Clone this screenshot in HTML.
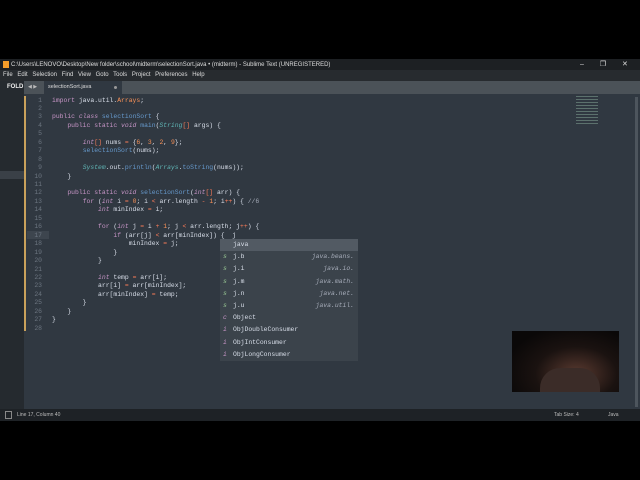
<!DOCTYPE html>
<html><head><style>
body{margin:0;width:640px;height:480px;background:#000;position:relative;overflow:hidden;font-family:"Liberation Sans",sans-serif}
.a{position:absolute}
pre{margin:0;font-family:"Liberation Mono",monospace;font-size:6.4px;line-height:8.45px;color:#d8dee9}
.k{color:#c594c5}.i{color:#c594c5;font-style:italic}.f{color:#6699cc}.t{color:#5fb3b3;font-style:italic}.n{color:#f99157}.o{color:#f97b58}.p{color:#a6acb9}.c{color:#a6acb9}
.ac div{height:12.2px;line-height:12.2px;font-family:"Liberation Mono",monospace;font-size:6.4px;color:#d8dee9;position:relative;padding-left:13px}
.ac b{position:absolute;left:3px;font-weight:normal;font-style:italic}
.ac em{position:absolute;right:4px;color:#a6acb9}
</style></head><body>
<div class="a" style="left:0;top:59px;width:640px;height:11px;background:#1d2023"></div>
<div class="a" style="left:3px;top:61px;width:6px;height:7px;background:#f59d2a"></div>
<div class="a" style="left:11px;top:60px;font-size:6px;color:#ddd;line-height:10px;white-space:nowrap">C:\Users\LENOVO\Desktop\New folder\school\midterm\selectionSort.java • (midterm) - Sublime Text (UNREGISTERED)</div>
<div class="a" style="left:580px;top:60px;font-size:7px;color:#ddd;line-height:10px;word-spacing:14px">– ❐ ✕</div>
<div class="a" style="left:0;top:70px;width:640px;height:11px;background:#272b2f"></div>
<div class="a" style="left:3px;top:70px;font-size:6px;color:#ddd;line-height:11px;word-spacing:3px;white-space:nowrap">File Edit Selection Find View Goto Tools Project Preferences Help</div>
<div class="a" style="left:0;top:81px;width:640px;height:13px;background:#4b5258"></div>
<div class="a" style="left:0;top:81px;width:24px;height:13px;background:#252a2f"></div>
<div class="a" style="left:7px;top:81px;font-size:6px;font-weight:bold;color:#eee;line-height:13px">FOLD</div>
<div class="a" style="left:28px;top:81px;font-size:5px;color:#bbb;line-height:13px">◀ ▶</div>
<div class="a" style="left:44px;top:81px;width:78px;height:13px;background:#303841"></div>
<div class="a" style="left:48px;top:81px;font-size:5.5px;color:#ddd;line-height:13px">selectionSort.java</div>
<div class="a" style="left:114px;top:86px;width:3px;height:3px;border-radius:2px;background:#999"></div>
<div class="a" style="left:0;top:94px;width:24px;height:315px;background:#252a2f"></div>
<div class="a" style="left:0;top:171px;width:24px;height:8px;background:#3a4047"></div>
<div class="a" style="left:24px;top:94px;width:616px;height:315px;background:#303841"></div>
<div class="a" style="left:24px;top:96px;width:2px;height:235px;background:#c9a15b"></div>
<div class="a" style="left:27px;top:231px;width:22px;height:8px;background:#3d454e"></div>
<pre class="a" style="left:28px;top:96.5px;width:14px;text-align:right;color:#6c7580">1
2
3
4
5
6
7
8
9
10
11
12
13
14
15
16
17
18
19
20
21
22
23
24
25
26
27
28</pre>
<pre class="a" style="left:52px;top:96.5px"><span class="k">import</span> java.util.<span class="n">Arrays</span>;

<span class="k">public</span> <span class="i">class</span> <span class="f">selectionSort</span> {
    <span class="k">public static</span> <span class="i">void</span> <span class="f">main</span>(<span class="t">String</span><span class="o">[]</span> args) {

        <span class="i">int</span><span class="o">[]</span> nums <span class="o">=</span> {<span class="n">6</span>, <span class="n">3</span>, <span class="n">2</span>, <span class="n">9</span>};
        <span class="f">selectionSort</span>(nums);

        <span class="t">System</span>.out.<span class="f">println</span>(<span class="t">Arrays</span>.<span class="f">toString</span>(nums));
    }

    <span class="k">public static</span> <span class="i">void</span> <span class="f">selectionSort</span>(<span class="i">int</span><span class="o">[]</span> arr) {
        <span class="k">for</span> (<span class="i">int</span> i <span class="o">=</span> <span class="n">0</span>; i <span class="o">&lt;</span> arr.length <span class="o">-</span> <span class="n">1</span>; i<span class="o">++</span>) { <span class="c">//6</span>
            <span class="i">int</span> minIndex <span class="o">=</span> i;

            <span class="k">for</span> (<span class="i">int</span> j <span class="o">=</span> i <span class="o">+</span> <span class="n">1</span>; j <span class="o">&lt;</span> arr.length; j<span class="o">++</span>) {
                <span class="k">if</span> (arr[j] <span class="o">&lt;</span> arr[minIndex]) {  j
                    minIndex <span class="o">=</span> j;
                }
            }

            <span class="i">int</span> temp <span class="o">=</span> arr[i];
            arr[i] <span class="o">=</span> arr[minIndex];
            arr[minIndex] <span class="o">=</span> temp;
        }
    }
}
</pre>
<div class="a" style="left:576px;top:96px;width:22px;height:30px;opacity:.5;background:repeating-linear-gradient(#8a9 0 1px,transparent 1px 3px)"></div>
<div class="a" style="left:635px;top:97px;width:3px;height:310px;background:#4d555d"></div>
<div class="a ac" style="left:220px;top:239px;width:138px;height:122px;background:#3b434b">
<div style="background:#525a63">java</div>
<div><b style="color:#99c794">s</b>j.b<em>java.beans.</em></div>
<div><b style="color:#99c794">s</b>j.i<em>java.io.</em></div>
<div><b style="color:#99c794">s</b>j.m<em>java.math.</em></div>
<div><b style="color:#99c794">s</b>j.n<em>java.net.</em></div>
<div><b style="color:#99c794">s</b>j.u<em>java.util.</em></div>
<div><b style="color:#c594c5">c</b>Object</div>
<div><b style="color:#c594c5">i</b>ObjDoubleConsumer</div>
<div><b style="color:#c594c5">i</b>ObjIntConsumer</div>
<div><b style="color:#c594c5">i</b>ObjLongConsumer</div>
</div>
<div class="a" style="left:512px;top:331px;width:107px;height:61px;background:radial-gradient(ellipse at 60% 70%,#5a3a30 0,#1a1210 45%,#0a0808 80%)"></div>
<div class="a" style="left:540px;top:368px;width:60px;height:24px;background:#3b2c28;border-radius:20px 20px 0 0"></div>
<div class="a" style="left:0;top:409px;width:640px;height:12px;background:#1e2226"></div>
<div class="a" style="left:5px;top:411px;width:5px;height:6px;border:1px solid #888"></div>
<div class="a" style="left:17px;top:409px;font-size:5px;color:#bbb;line-height:12px">Line 17, Column 40</div>
<div class="a" style="left:554px;top:409px;font-size:5px;color:#bbb;line-height:12px">Tab Size: 4</div>
<div class="a" style="left:608px;top:409px;font-size:5px;color:#bbb;line-height:12px">Java</div>
</body></html>
